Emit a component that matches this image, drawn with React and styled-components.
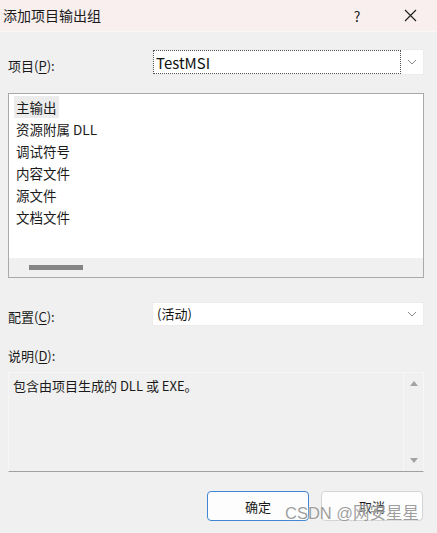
import React from "react";
import styled, { createGlobalStyle } from "styled-components";

const Global = createGlobalStyle`
  html, body { margin: 0; padding: 0; background: #f0f0f0; }
  body { font-family: "Noto Sans CJK SC", "Noto Sans", sans-serif; color: #1a1a1a; }
`;

const Window = styled.div`
  position: relative;
  width: 437px;
  height: 533px;
  background: #f0f0f0;
  display: flex;
  flex-direction: column;
  overflow: hidden;
`;

const TitleBar = styled.div`
  height: 31px;
  flex: none;
  background: #f8efee;
  border-bottom: 1px solid #fbf7f6;
  display: flex;
  align-items: center;
  padding-left: 3px;
`;

const Title = styled.div`
  flex: 1;
  font-size: 14px;
  line-height: 20px;
  color: #1a1a1a;
  margin-top: -2px;
`;

const TitleButton = styled.div`
  width: ${(p) => p.$w}px;
  margin-right: ${(p) => p.$mr || 0}px;
  height: 31px;
  display: flex;
  align-items: center;
  justify-content: center;
  font-size: 14px;
  color: #222;
`;

const Body = styled.div`
  flex: 1;
  display: flex;
  flex-direction: column;
  padding: 0 13px 0 8px;
`;

const FieldRow = styled.div`
  display: flex;
  align-items: center;
  margin-top: ${(p) => p.$mt}px;
`;

const Label = styled.div`
  width: ${(p) => p.$w || 144}px;
  flex: none;
  font-size: 13px;
  line-height: 18px;
  color: #1a1a1a;
  margin-top: ${(p) => p.$mt || 0}px;
  u { text-decoration: underline; text-underline-offset: 2px; }
`;

const Combo = styled.div`
  flex: 1;
  height: ${(p) => p.$h}px;
  background: #ffffff;
  border: 1px solid #ececec;
  box-sizing: border-box;
  display: flex;
  align-items: stretch;
`;

const ComboValue = styled.div`
  flex: 1;
  display: flex;
  align-items: center;
  padding-left: ${(p) => (p.$focus ? 2 : 3)}px;
  font-size: ${(p) => p.$fs}px;
  color: #111;
  border: ${(p) => (p.$focus ? "1px dotted #555" : "1px solid transparent")};
  box-sizing: border-box;
`;

const ComboArrow = styled.div`
  width: 22px;
  flex: none;
  display: flex;
  align-items: center;
  justify-content: center;
`;

const ListBox = styled.div`
  margin-top: 18px;
  height: 185px;
  box-sizing: border-box;
  border: 1px solid #a9a9a9;
  background: #ffffff;
  display: flex;
  flex-direction: column;
`;

const ListItems = styled.div`
  flex: 1;
  padding: 2px 0 0 5px;
  display: flex;
  flex-direction: column;
  align-items: flex-start;
`;

const ListItem = styled.div`
  font-size: 13.5px;
  line-height: 22px;
  height: 22px;
  padding: 0 2px;
  background: ${(p) => (p.$sel ? "#ececec" : "transparent")};
  color: #1a1a1a;
`;

const HScroll = styled.div`
  height: 19px;
  flex: none;
  background: #f0f0f0;
  display: flex;
  align-items: center;
  padding-left: 20px;
`;

const HThumb = styled.div`
  width: 54px;
  height: 5px;
  background: #858585;
`;

const DescBox = styled.div`
  margin-top: 7px;
  height: 100px;
  box-sizing: border-box;
  background: #f0f0f0;
  border: 1px solid #f6f6f6;
  border-bottom: 1px solid #a0a0a0;
  display: flex;
`;

const DescText = styled.div`
  flex: 1;
  font-size: 13px;
  line-height: 18px;
  padding: 4px 0 0 4px;
  color: #1a1a1a;
`;

const VScroll = styled.div`
  width: 19px;
  flex: none;
  border-left: 1px solid #f7f7f7;
  display: flex;
  flex-direction: column;
  justify-content: space-between;
  align-items: center;
  padding: 8px 0 8px;
`;

const ButtonRow = styled.div`
  margin-top: 19px;
  display: flex;
  justify-content: flex-end;
  gap: 12px;
  padding-right: 1px;
`;

const Button = styled.div`
  width: 102px;
  height: 30px;
  box-sizing: border-box;
  border-radius: 4px;
  border: 1px solid ${(p) => (p.$primary ? "#3f86d4" : "#d4d4d4")};
  background: #fdfdfd;
  display: flex;
  align-items: center;
  justify-content: center;
  font-size: 13px;
  color: #1a1a1a;
`;

const Watermark = styled.div`
  position: absolute;
  left: 285px;
  top: 502px;
  font-size: 16.5px;
  line-height: 22px;
  color: rgba(140, 140, 140, 0.85);
  font-family: "Liberation Sans", "Noto Sans CJK SC", sans-serif;
  text-shadow: 0 0 2px rgba(255, 255, 255, 0.9);
  white-space: nowrap;
`;

const Chevron = () => (
  <svg width="10" height="6" viewBox="0 0 10 6">
    <path d="M1 1 L5 5 L9 1" fill="none" stroke="#8a8a8a" strokeWidth="1" />
  </svg>
);

const CloseIcon = () => (
  <svg width="13" height="13" viewBox="0 0 13 13">
    <path d="M1 1 L12 12 M12 1 L1 12" stroke="#222" strokeWidth="1.2" />
  </svg>
);

const Tri = ({ up }) => (
  <svg width="8" height="5" viewBox="0 0 8 5">
    <path d={up ? "M0 5 L4 0 L8 5 Z" : "M0 0 L4 5 L8 0 Z"} fill="#a3a3a3" />
  </svg>
);

const items = ["主输出", "资源附属 DLL", "调试符号", "内容文件", "源文件", "文档文件"];

export default function App() {
  return (
    <>
      <Global />
      <Window>
        <TitleBar>
          <Title>添加项目输出组</Title>
          <TitleButton $w={20} $mr={16}>?</TitleButton>
          <TitleButton $w={54}>
            <CloseIcon />
          </TitleButton>
        </TitleBar>
        <Body>
          <FieldRow $mt={17}>
            <Label $mt={8}>
              项目(<u>P</u>):
            </Label>
            <Combo $h={26}>
              <ComboValue $focus $fs={15}>TestMSI</ComboValue>
              <ComboArrow>
                <Chevron />
              </ComboArrow>
            </Combo>
          </FieldRow>
          <ListBox>
            <ListItems>
              {items.map((t, i) => (
                <ListItem key={t} $sel={i === 0}>
                  {t}
                </ListItem>
              ))}
            </ListItems>
            <HScroll>
              <HThumb />
            </HScroll>
          </ListBox>
          <FieldRow $mt={23}>
            <Label $mt={7}>
              配置(<u>C</u>):
            </Label>
            <Combo $h={24}>
              <ComboValue $fs={13}>(活动)</ComboValue>
              <ComboArrow>
                <Chevron />
              </ComboArrow>
            </Combo>
          </FieldRow>
          <Label $mt={21}>
            说明(<u>D</u>):
          </Label>
          <DescBox>
            <DescText>包含由项目生成的 DLL 或 EXE。</DescText>
            <VScroll>
              <Tri up />
              <Tri />
            </VScroll>
          </DescBox>
          <ButtonRow>
            <Button $primary>确定</Button>
            <Button>取消</Button>
          </ButtonRow>
        </Body>
        <Watermark>CSDN @网安星星</Watermark>
      </Window>
    </>
  );
}
